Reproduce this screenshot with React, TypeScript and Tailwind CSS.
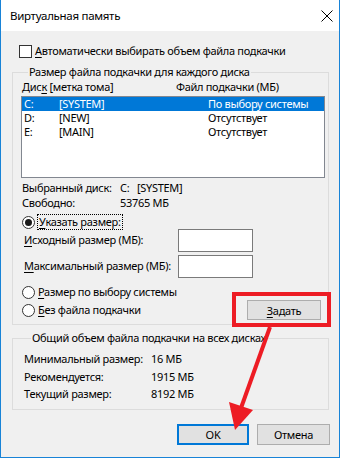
import { ReactNode } from 'react'

/* маленький помощник: буква-акселератор с подчёркиванием */
function U({ children }: { children: ReactNode }) {
  return <span className="underline underline-offset-2">{children}</span>
}

function Radio({ checked }: { checked?: boolean }) {
  return (
    <span className="w-[13px] h-[13px] rounded-full border border-[#333] bg-white flex items-center justify-center shrink-0">
      {checked && <span className="w-[7px] h-[7px] rounded-full bg-[#1a1a1a]" />}
    </span>
  )
}

const rows = [
  { d: 'C:', label: '[SYSTEM]', file: 'По выбору системы', sel: true },
  { d: 'D:', label: '[NEW]', file: 'Отсутствует' },
  { d: 'E:', label: '[MAIN]', file: 'Отсутствует' },
]

export default function App() {
  return (
    <div
      className="relative w-[340px] h-[458px] flex flex-col border-x border-b border-[#1883d7] bg-[#f0f0f0] text-[11px] tracking-[-0.3px] whitespace-nowrap text-black overflow-hidden"
      style={{ fontFamily: '"Noto Sans", "Open Sans", sans-serif' }}
    >
      {/* ===== TITLE BAR ===== */}
      <div className="h-[31px] bg-white flex items-center justify-between pl-[9px] pr-[5px] shrink-0">
        <span className="text-[11.5px] leading-none">Виртуальная память</span>
        <svg width="12" height="12" viewBox="0 0 12 12" className="mr-[1px]">
          <path d="M0.5 0.5 L11.5 11.5 M11.5 0.5 L0.5 11.5" stroke="#000" strokeWidth="1" />
        </svg>
      </div>

      {/* ===== CONTENT ===== */}
      <div className="flex flex-col pl-[11px]">
        <label className="flex items-center gap-[3px] h-[16px] mt-[12px] ml-[7px]">
          <span className="w-[13px] h-[13px] border border-[#333] bg-white" />
          <span className="leading-[16px]"><U>А</U>втоматически выбирать объем файла подкачки</span>
        </label>

        {/* ===== ГРУППА 1 ===== */}
        <fieldset className="mt-[5px] w-[317px] border border-[#dcdcdc] pl-[8px] pr-[3px] pb-[5px]">
          <legend className="ml-[7px] px-[1px] leading-[16px]">Размер файла подкачки для каждого диска</legend>

          <div className="flex leading-[16px] -mt-[1px] ml-[1px]">
            <span className="w-[154px]">Дис<U>к</U> [метка тома]</span>
            <span>Файл подкачки (МБ)</span>
          </div>

          <div className="mt-[1px] h-[82px] border border-[#828790] bg-white">
            {rows.map(r => (
              <div
                key={r.d}
                className={
                  'grid grid-cols-[35px_149px_1fr] pl-[2px] h-[14px] leading-[14px] ' +
                  (r.sel ? 'bg-[#0078d7] text-white' : '')
                }
              >
                <span>{r.d}</span>
                <span>{r.label}</span>
                <span>{r.file}</span>
              </div>
            ))}
          </div>

          <div className="mt-[2px] ml-[1px] leading-[15px]">
            <div className="flex"><span className="w-[98px]">Выбранный диск:</span><span>C:&nbsp;&nbsp;&nbsp;[SYSTEM]</span></div>
            <div className="flex"><span className="w-[98px]">Свободно:</span><span>53765 МБ</span></div>
          </div>

          <div className="mt-[4px] ml-[1px] flex items-center gap-[2px] h-[16px]">
            <Radio checked />
            <span className="border border-dotted border-black px-[1px] leading-[14px]"><U>У</U>казать размер:</span>
          </div>

          <div className="mt-[-1px] flex flex-col gap-[3px]">
            <div className="flex items-center">
              <span className="w-[157px] pl-[3px]"><U>И</U>сходный размер (МБ):</span>
              <span className="w-[75px] h-[23px] border border-[#7a7a7a] bg-white" />
            </div>
            <div className="flex items-center">
              <span className="w-[157px] pl-[3px]"><U>М</U>аксимальный размер (МБ):</span>
              <span className="w-[75px] h-[23px] border border-[#7a7a7a] bg-white" />
            </div>
          </div>

          <div className="mt-[5px] flex items-end justify-between">
            <div className="flex flex-col ml-[1px]">
              <div className="flex items-center gap-[3px] h-[18px]"><Radio /><span><U>Р</U>азмер по выбору системы</span></div>
              <div className="flex items-center gap-[3px] h-[18px]"><Radio /><span><U>Б</U>ез файла подкачки</span></div>
            </div>
            <button className="w-[74px] h-[20px] mr-[4px] border border-[#adadad] bg-[#e1e1e1] leading-none mb-[-1px]">
              <U>З</U>адать
            </button>
          </div>
        </fieldset>

        {/* ===== ГРУППА 2 ===== */}
        <fieldset className="mt-[5px] w-[317px] border border-[#dcdcdc] pl-[11px] pb-[6px]">
          <legend className="ml-[7px] px-[1px] leading-[16px]">Общий объем файла подкачки на всех дисках</legend>
          <div className="mt-[4px] flex flex-col">
            {[
              ['Минимальный размер:', '16 МБ'],
              ['Рекомендуется:', '1915 МБ'],
              ['Текущий размер:', '8192 МБ'],
            ].map(([k, v]) => (
              <div key={k} className="flex h-[17.5px] leading-[17.5px]">
                <span className="w-[127px]">{k}</span>
                <span>{v}</span>
              </div>
            ))}
          </div>
        </fieldset>

        {/* ===== КНОПКИ ===== */}
        <div className="mt-[14px] flex justify-end gap-[8px] pr-[9px]">
          <button className="w-[72px] h-[21px] border-2 border-[#0078d7] bg-[#e1e1e1] leading-none">OK</button>
          <button className="w-[73px] h-[21px] border border-[#adadad] bg-[#e1e1e1] leading-none">Отмена</button>
        </div>
      </div>

      {/* ===== АННОТАЦИЯ (красная рамка и стрелка) ===== */}
      <svg className="absolute left-[-1px] top-0 pointer-events-none" width="340" height="458" viewBox="0 0 340 458">
        <rect x="234" y="294" width="95" height="31" fill="none" stroke="#ed1c24" strokeWidth="4" />
        <path d="M270 327 L241 408" stroke="#ed1c24" strokeWidth="4" />
        <polygon points="229,402 253,410 235,430" fill="#ed1c24" />
      </svg>
    </div>
  )
}
